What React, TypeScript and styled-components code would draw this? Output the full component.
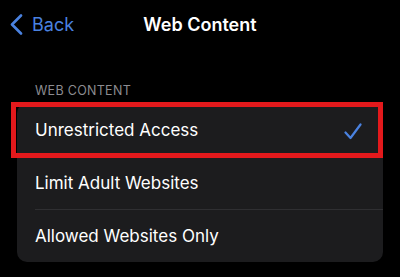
import React from "react";
import styled, { createGlobalStyle } from "styled-components";

const Global = createGlobalStyle`
  html, body { margin: 0; padding: 0; background: #000; }
  body { font-family: Inter, "Noto Sans", "Liberation Sans", sans-serif; -webkit-font-smoothing: antialiased; }
`;

const Screen = styled.div`
  width: 400px;
  height: 277px;
  background: #000;
  overflow: hidden;
`;

const NavBar = styled.div`
  height: 46px;
  display: grid;
  grid-template-columns: 1fr auto 1fr;
  align-items: center;
`;

const BackButton = styled.div`
  display: flex;
  align-items: center;
  gap: 9px;
  padding-left: 10px;
  color: #4a82e0;
  font-size: 18px;
  font-weight: 400;
  padding-top: 2px;
`;

const Title = styled.div`
  color: #fff;
  font-size: 18px;
  font-weight: 600;
  padding-top: 2px;
`;

const Section = styled.div`
  padding: 0 17px;
`;

const SectionHeader = styled.div`
  color: #8c8c91;
  font-size: 12.5px;
  letter-spacing: 0.3px;
  padding: 38px 0 5px 18px;
  line-height: 14px;
`;

const Card = styled.div`
  position: relative;
  background: #1c1c1e;
  border-radius: 10px;
`;

const Row = styled.div<{ $divider?: boolean }>`
  position: relative;
  height: 53px;
  display: flex;
  align-items: center;
  justify-content: space-between;
  padding: 1px 21px 0 18px;
  box-sizing: border-box;
  color: #fff;
  font-size: 17px;

  &::before {
    content: "";
    display: ${(p) => (p.$divider ? "block" : "none")};
    position: absolute;
    top: 0;
    left: 18px;
    right: 0;
    height: 1px;
    background: #2f2f32;
  }
`;

const CheckWrap = styled.span`
  display: flex;
  margin-top: 3px;
`;

const Highlight = styled.div`
  position: absolute;
  left: -6px;
  right: 0;
  top: -1px;
  height: 56px;
  border: 5px solid #e3191c;
  box-sizing: border-box;
  pointer-events: none;
`;

const Check = () => (
  <svg width="18" height="17" viewBox="0 0 18 17" fill="none">
    <path d="M1.5 9.5 L6.5 15 L16.5 1.5" stroke="#4a82e0" strokeWidth="2.2" strokeLinecap="round" strokeLinejoin="round" />
  </svg>
);

const Chevron = () => (
  <svg width="13" height="21" viewBox="0 0 13 21" fill="none">
    <path d="M11 1.5 L2 10.5 L11 19.5" stroke="#4a82e0" strokeWidth="2.6" strokeLinecap="round" strokeLinejoin="round" />
  </svg>
);

const options = ["Unrestricted Access", "Limit Adult Websites", "Allowed Websites Only"];

export default function App() {
  return (
    <Screen>
      <Global />
      <NavBar>
        <BackButton>
          <Chevron />
          Back
        </BackButton>
        <Title>Web Content</Title>
        <div />
      </NavBar>
      <Section>
        <SectionHeader>WEB CONTENT</SectionHeader>
        <Card>
          {options.map((o, i) => (
            <Row key={o} $divider={i > 0}>
              <span>{o}</span>
              {i === 0 && (
                <CheckWrap>
                  <Check />
                </CheckWrap>
              )}
            </Row>
          ))}
          <Highlight />
        </Card>
      </Section>
    </Screen>
  );
}
